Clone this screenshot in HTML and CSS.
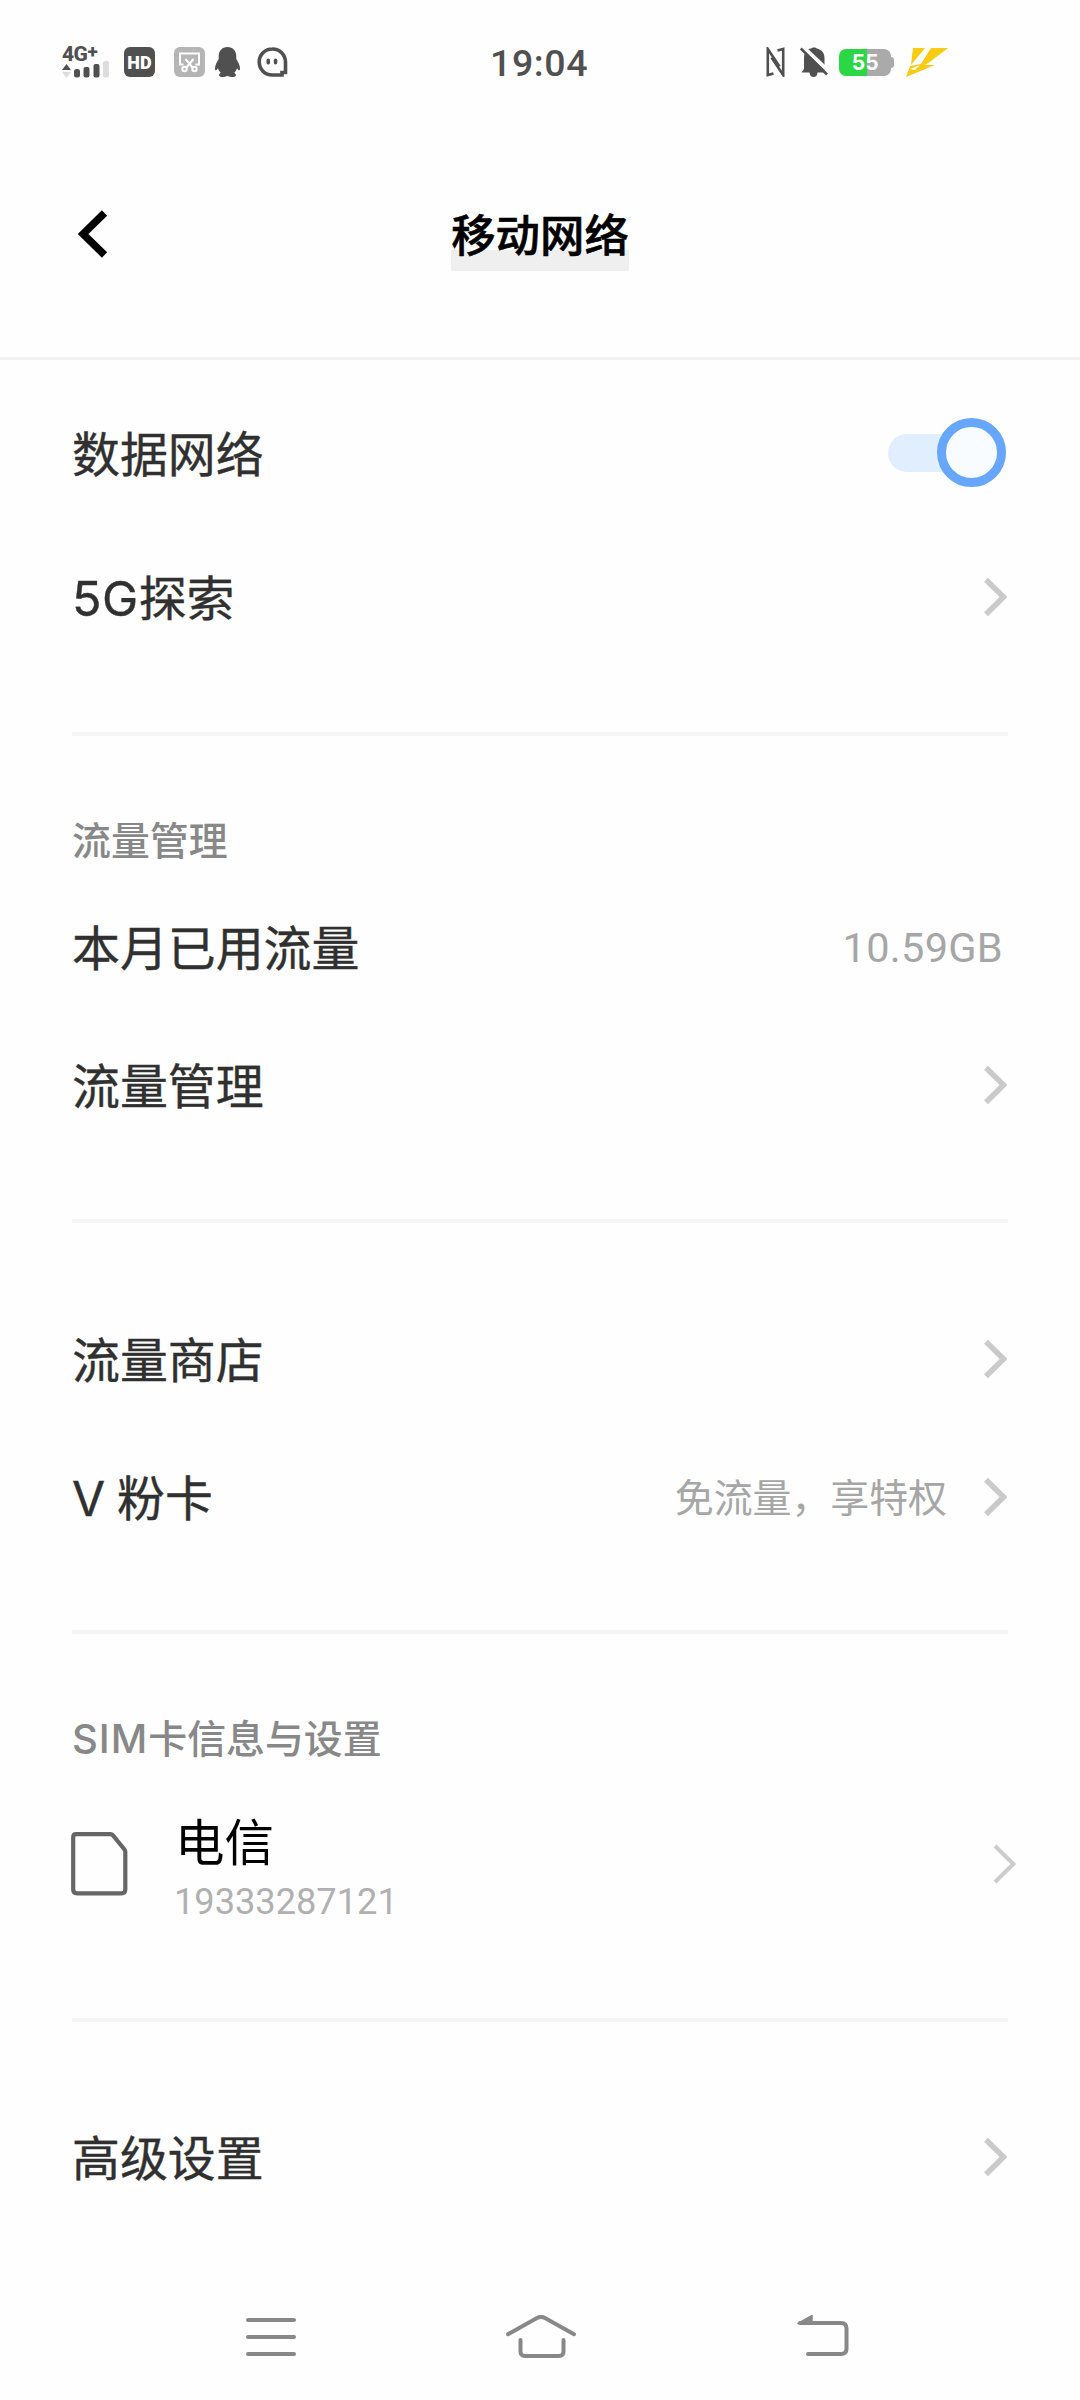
FILE: index.html
```html
<!DOCTYPE html>
<html lang="zh-CN">
<head>
<meta charset="utf-8">
<title>移动网络</title>
<link rel="stylesheet" href="styles.css">
</head>
<body>
<svg class="defs" width="0" height="0">
  <symbol id="chevron" viewBox="0 0 23 40"><path d="M2 2.800 19.600 20 2 37.200" fill="none" stroke="currentColor" stroke-width="5.600"/></symbol>
</svg>
<div class="statusbar">
  <div class="status-left">
    <div class="signal">
      <span class="net">4G<sup>+</sup></span>
      <svg width="47" height="16" viewBox="0 0 47 16"><path d="M0 7 4.500 1 9 7z" fill="#505050"/><path d="M0 9h9L4.500 15z" fill="#ddd"/><g fill="#505050"><rect x="12" y="6" width="6" height="8.500" rx="2.500"/><rect x="21.500" y="4" width="6" height="10.500" rx="2"/><rect x="31.500" y="1" width="6" height="13.500" rx="2"/></g><rect x="41" y="-2" width="6" height="16.500" rx="2" fill="#ddd"/></svg>
    </div>
    <span class="hd">HD</span>
    <svg class="scissors" width="31" height="30" viewBox="0 0 31 30"><rect width="31" height="30" rx="6" fill="#b5b5b5"/><g fill="none" stroke="#fff" stroke-width="2"><path d="M9.500 17.500H6V6.500h19v11h-3.500M11.500 12 19 21M19.500 12 12 21"/><circle cx="10.500" cy="22" r="2.200"/><circle cx="20.500" cy="22" r="2.200"/></g></svg>
    <svg class="penguin" width="27" height="30" viewBox="0 0 27 30"><path d="M13.500 0C8 0 4.700 4 4.700 9v3C3 15 .8 18.500 1 22c.1 2 1.500 1.600 3-.8.6 2 1.500 3.400 2.800 4.600-2 .9-2.500 3.200-.4 3.900 2.500.7 5.500.2 7.100-.6 1.600.8 4.600 1.300 7.100.6 2.100-.7 1.600-3-.4-3.900 1.300-1.200 2.200-2.600 2.800-4.600 1.500 2.400 2.900 2.800 3 .8.200-3.500-2-7-3.700-10V9c0-5-3.300-9-8.800-9z" fill="#505050"/></svg>
    <svg class="ghost" width="31" height="30" viewBox="0 0 31 30"><path d="M15.200 2A13 13 0 0 0 15.200 28H25V25.500H28.500V15A13 13 0 0 0 15.200 2z" fill="none" stroke="#505050" stroke-width="3.600"/><rect x="9.500" y="11.500" width="3.500" height="6" rx="1.700" fill="#505050"/><rect x="16.800" y="11.500" width="3.500" height="6" rx="1.700" fill="#505050"/></svg>
  </div>
  <div class="clock">19:04</div>
  <div class="status-right">
    <svg width="19" height="30" viewBox="0 0 19 30"><path d="M7.500 26.500 1.800 28V2L13.500 19.500M11.500 3.500 17.200 2V28L5.500 10.500" fill="none" stroke="#505050" stroke-width="2.600"/></svg>
    <svg class="bell" width="28" height="30" viewBox="0 0 28 30"><path d="M4.500 25.500h-3L4 22v-11C4 5 7.500 2 11 1.500 12 0 16 0 17 1.500c4 1 7.500 4 7.500 9.500v11l1 3.500h-8c0 6-8 6-8 0z" fill="#505050"/><path d="M2-1 30 25.500" stroke="#fff" stroke-width="4"/><path d="M.8 1.500 27 27.500" stroke="#505050" stroke-width="2.600"/></svg>
    <div class="battery"><span class="level">55</span><i></i></div>
    <svg class="bolt" width="42" height="29" viewBox="0 0 42 29"><path d="M7 0H19L5 17zM25 0H42L25 13 19 17H29L0 29 4 18 15 16z" fill="#f8ca12"/><path d="M4 21 14 17 9 22z" fill="#fff"/></svg>
  </div>
</div>
<header class="header">
  <svg class="back" width="30" height="48" viewBox="0 0 30 48"><path d="M26.500 3 5 24 26.500 45" fill="none" stroke="#000" stroke-width="7.500"/></svg>
  <h1>移动网络</h1>
</header>
<main>
  <section class="group first">
    <div class="row data"><span>数据网络</span><span class="switch"></span></div>
    <div class="row five"><span><b>5G</b>探索</span><svg class="chev"><use href="#chevron"/></svg></div>
  </section>
  <section class="group traffic">
    <h2>流量管理</h2>
    <div class="row used"><span>本月已用流量</span><span class="amount">10.59GB</span></div>
    <div class="row"><span>流量管理</span><svg class="chev"><use href="#chevron"/></svg></div>
  </section>
  <section class="group shop">
    <div class="row"><span>流量商店</span><svg class="chev"><use href="#chevron"/></svg></div>
    <div class="row"><span><b class="v">V</b> 粉卡</span><span class="hint">免流量，享特权</span><svg class="chev"><use href="#chevron"/></svg></div>
  </section>
  <section class="group sim">
    <h2><b>SIM</b>卡信息与设置</h2>
    <div class="simrow">
      <svg class="card" width="57" height="64" viewBox="0 0 57 64"><path d="M5 2.200H39.500Q41 2.200 42 3.400L53.500 17.500Q54.300 18.500 54.300 20V57.500Q54.300 61.300 50.500 61.300H6Q2.200 61.300 2.200 57.500V5.500Q2.200 2.200 5 2.200z" fill="none" stroke="#666" stroke-width="4.200"/></svg>
      <div class="carrier"><p class="name">电信</p><p class="number">19333287121</p></div>
      <svg class="chev thin" viewBox="0 0 23 40"><path d="M2 2 20.500 20 2 38" fill="none" stroke="#ccc" stroke-width="4"/></svg>
    </div>
  </section>
  <section class="group advanced">
    <div class="row"><span>高级设置</span><svg class="chev"><use href="#chevron"/></svg></div>
  </section>
</main>
<nav class="navbar">
  <svg width="50" height="44" viewBox="0 0 50 44"><path d="M2 5H48M2 22H48M2 39H48"/></svg>
  <svg width="72" height="44" viewBox="0 0 72 44"><path d="M3 19.200 32 3Q36 .8 40 3L69 19.200M15.500 25V36.500Q15.500 41 20 41H54Q58.500 41 58.500 36.500V25"/></svg>
  <svg width="52" height="44" viewBox="0 0 52 44"><path d="M3 8H44Q49.500 8 49.500 13.500V33.500Q49.500 39 44 39H11"/><path class="head" d="M1 8.500 15 .5V8z"/></svg>
</nav>
</body>
</html>
```
FILE: styles.css
```css
*, *::after { box-sizing: border-box; }
body {
  margin: 0;
  width: 1080px;
  height: 2400px;
  display: flex;
  flex-direction: column;
  background: #fefefe;
  color: #303030;
  font-family: Roboto, "Noto Sans CJK SC", sans-serif;
}
svg { display: block; flex: none; }
.defs { position: absolute; }
h1, h2, p { margin: 0; }
b { font-family: Inter, sans-serif; font-weight: 400; }

.statusbar {
  height: 124px;
  padding: 0 133px 0 62px;
  display: grid;
  grid-template-columns: 428px 1fr 360px;
  align-items: center;
}
.status-left, .status-right { display: flex; align-items: center; }
.status-right { justify-content: flex-end; }
.signal { width: 47px; color: #505050; }
.net { display: block; font: 800 21px/17px Roboto, sans-serif; letter-spacing: -0.500px; }
.net sup { font-size: 19px; line-height: 0; vertical-align: 3px; }
.signal svg { overflow: visible; }
.hd {
  width: 31px;
  height: 30px;
  margin-left: 15px;
  border-radius: 6px;
  background: #505050;
  color: #fff;
  font: 900 18px/31px Roboto, sans-serif;
  text-align: center;
}
.scissors { margin-left: 19px; }
.penguin { margin-left: 9px; }
.ghost { margin-left: 16px; }
.clock {
  color: #505050;
  font: 500 37.500px/44px Roboto, sans-serif;
  letter-spacing: 0.600px;
  padding-top: 2px;
}
.bell { margin-left: 15px; }
.battery { display: flex; align-items: center; margin-left: 11px; }
.level {
  width: 52px;
  height: 27px;
  border-radius: 7px;
  background: linear-gradient(90deg, #2bd744 28px, #aaa 28px);
  color: #fff;
  font: 700 21px/28px Inter, sans-serif;
  text-align: center;
}
.battery i { width: 3px; height: 11px; border-radius: 0 3px 3px 0; background: #aaa; }
.bolt { margin-left: 12px; }

.header {
  height: 236px;
  padding: 0 78px;
  display: grid;
  grid-template-columns: 30px 1fr 30px;
  align-items: start;
  border-bottom: 3px solid #f2f2f2;
}
.back { margin-top: 86px; }
h1 {
  justify-self: center;
  height: 64px;
  margin-top: 83px;
  background: linear-gradient(transparent 43px, #efefef 43px);
  color: #000;
  font-size: 44.400px;
  line-height: 61px;
  font-weight: 500;
  -webkit-text-stroke: 0.600px;
}

.group { margin: 0 72px; border-bottom: 4px solid #f5f5f5; }
.row {
  height: 138px;
  display: flex;
  align-items: center;
  font-size: 47.900px;
  line-height: 60px;
  font-weight: 400;
  -webkit-text-stroke: 0.400px;
}
.row > :first-child { flex: 1; padding-top: 5px; }
.row b { font-size: 48.500px; line-height: 1; letter-spacing: 0.500px; }
.row .v { font-size: 48px; letter-spacing: 0; }
.chev { width: 23px; height: 40px; color: #cacaca; }
.row .chev { margin-right: 1px; }
h2 {
  height: 60px;
  color: #888;
  font-size: 38.900px;
  line-height: 62px;
  font-weight: 500;
}
h2 b { font-size: 40px; line-height: 1; font-weight: 500; letter-spacing: 1px; }

.first { height: 376px; padding-top: 24px; }
.five { height: 150px; }
.switch {
  position: relative;
  width: 118px;
  height: 38px;
  margin-right: 2px;
  border-radius: 19px;
  background: #e1eefe;
}
.switch::after {
  content: "";
  position: absolute;
  right: 0;
  top: -16px;
  width: 69px;
  height: 69px;
  border: 9px solid #66a6fb;
  border-radius: 50%;
  background: #f9fcff;
}
.traffic { height: 487px; padding-top: 75px; }
.used { margin-top: 7px; }
.amount, .hint { color: #a6a6a6; -webkit-text-stroke: 0; }
.amount { margin-right: 5px; padding-top: 2px; font-size: 41.500px; letter-spacing: 0.300px; }
.hint { margin-right: 37px; padding-top: 3px; font-size: 38.900px; }
.shop { height: 411px; padding-top: 67px; }
.sim { height: 388px; padding-top: 75px; }
.simrow { height: 160px; margin-top: 15px; display: flex; align-items: center; }
.card { margin-left: -1px; }
.carrier { flex: 1; margin-left: 47px; padding-top: 10px; }
.name { color: #000; font-size: 49.500px; line-height: 66px; }
.number { margin-left: -1px; color: #b0b0b0; font-size: 36.200px; line-height: 50px; }
.thin { margin-right: -8px; }
.advanced { height: 240px; padding-top: 66px; border-bottom: 0; }

.navbar {
  flex: 1;
  padding: 53px 0 0 246px;
  display: grid;
  grid-template-columns: 259px 292px 52px;
}
.navbar path { fill: none; stroke: #888; stroke-width: 4; stroke-linecap: round; }
.navbar .head { fill: #888; stroke-width: 1.500; stroke-linejoin: round; }
```
